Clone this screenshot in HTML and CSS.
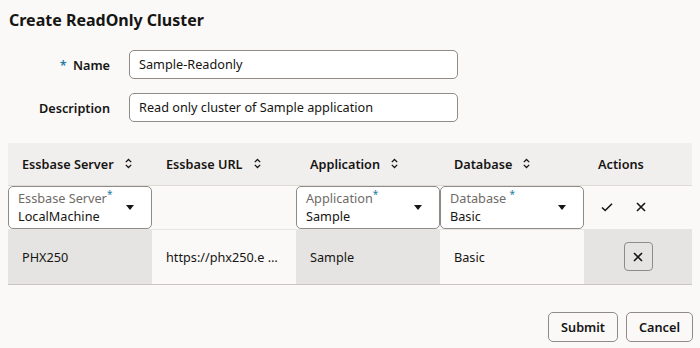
FILE: index.html
```html
<!DOCTYPE html>
<html lang="en">

<head>
  <meta charset="UTF-8">
  <title>Create ReadOnly Cluster</title>
  <link rel="stylesheet" href="styles.css">
</head>

<body>
  <h1 class="page-title">Create ReadOnly Cluster</h1>

  <div class="form">
    <div class="form-row">
      <label class="form-label"><span class="required">*</span> Name</label>
      <div class="text-input">Sample-Readonly</div>
    </div>
    <div class="form-row">
      <label class="form-label">Description</label>
      <div class="text-input">Read only cluster of Sample application</div>
    </div>
  </div>

  <table class="grid">
    <thead>
      <tr>
        <th><span class="th-inner">Essbase Server <svg class="sort" viewBox="0 0 10 14"><path d="M2 5.5 5 2.5 8 5.5M2 8.5 5 11.5 8 8.5"/></svg></span></th>
        <th><span class="th-inner">Essbase URL <svg class="sort" viewBox="0 0 10 14"><path d="M2 5.5 5 2.5 8 5.5M2 8.5 5 11.5 8 8.5"/></svg></span></th>
        <th><span class="th-inner">Application <svg class="sort" viewBox="0 0 10 14"><path d="M2 5.5 5 2.5 8 5.5M2 8.5 5 11.5 8 8.5"/></svg></span></th>
        <th><span class="th-inner">Database <svg class="sort" viewBox="0 0 10 14"><path d="M2 5.5 5 2.5 8 5.5M2 8.5 5 11.5 8 8.5"/></svg></span></th>
        <th>Actions</th>
      </tr>
    </thead>
    <tbody>
      <tr class="edit-row">
        <td class="cell-select">
          <div class="select">
            <div class="select-text">
              <span class="select-label">Essbase Server<span class="star">*</span></span>
              <span class="select-value">LocalMachine</span>
            </div>
            <span class="caret"></span>
          </div>
        </td>
        <td></td>
        <td class="cell-select">
          <div class="select">
            <div class="select-text">
              <span class="select-label">Application<span class="star">*</span></span>
              <span class="select-value">Sample</span>
            </div>
            <span class="caret"></span>
          </div>
        </td>
        <td class="cell-select">
          <div class="select">
            <div class="select-text">
              <span class="select-label">Database <span class="star">*</span></span>
              <span class="select-value">Basic</span>
            </div>
            <span class="caret"></span>
          </div>
        </td>
        <td>
          <div class="row-actions">
            <svg class="icon" viewBox="0 0 14 14"><path d="M2 7.5 5.2 10.5 12 3.8"/></svg>
            <svg class="icon" viewBox="0 0 14 14"><path d="M3 3 11 11M11 3 3 11"/></svg>
          </div>
        </td>
      </tr>
      <tr class="data-row">
        <td class="shade">PHX250</td>
        <td class="truncate">https://phx250.e …</td>
        <td class="shade">Sample</td>
        <td>Basic</td>
        <td class="shade">
          <div class="delete-wrap">
            <span class="icon-button"><svg class="icon" viewBox="0 0 14 14"><path d="M3 3 11 11M11 3 3 11"/></svg></span>
          </div>
        </td>
      </tr>
    </tbody>
  </table>

  <div class="footer">
    <button class="btn">Submit</button>
    <button class="btn">Cancel</button>
  </div>
</body>

</html>
```

FILE: styles.css
```css
* {
  margin: 0;
  padding: 0;
  box-sizing: border-box;
}

body {
  font-family: 'Noto Sans', sans-serif;
  font-size: 12.7px;
  color: #161513;
  background: #faf9f8;
  width: 700px;
  height: 348px;
  padding: 0 7px 0 8px;
  overflow: hidden;
}

.page-title {
  font-size: 16px;
  font-weight: 700;
  line-height: 20px;
  padding: 10px 0 0 1px;
  height: 50px;
}

.form {
  display: flex;
  flex-direction: column;
  gap: 14px;
}

.form-row {
  display: flex;
  align-items: center;
  gap: 19px;
}

.form-label {
  width: 102px;
  text-align: right;
  font-weight: 600;
}

.required {
  color: #227e9e;
  margin-right: 3px;
}

.text-input {
  width: 329px;
  height: 29px;
  border: 1px solid #8f8c88;
  border-radius: 5px;
  background: #fff;
  padding: 0 9px;
  line-height: 27px;
}

.grid {
  margin-top: 21px;
  width: 684px;
  border-collapse: collapse;
  table-layout: fixed;
}

.grid th {
  height: 42px;
  background: #f1efed;
  text-align: left;
  font-weight: 600;
  padding: 0 14px;
  border-bottom: 1px solid #dfdcd8;
}

.grid th:nth-child(-n+4) {
  width: 144px;
}

.th-inner {
  display: flex;
  align-items: center;
  gap: 10px;
}

.sort {
  width: 9px;
  height: 13px;
  fill: none;
  stroke: #161513;
  stroke-width: 1.4;
}

.grid td {
  padding: 0 14px;
  vertical-align: middle;
}

.edit-row td {
  height: 44px;
  border-bottom: 1px solid #e7e5e2;
}

.edit-row td.cell-select {
  padding: 0;
}

.select {
  height: 43px;
  border: 1px solid #8f8c88;
  border-radius: 5px;
  background: #fff;
  display: flex;
  align-items: center;
  padding: 0 17px 0 9px;
}

.select-text {
  flex: 1;
  display: flex;
  flex-direction: column;
  line-height: 18px;
}

.select-label {
  color: #6f6b67;
}

.star {
  color: #227e9e;
  font-size: 10px;
  line-height: 1;
  vertical-align: 5px;
}

.caret {
  width: 0;
  height: 0;
  border-left: 4px solid transparent;
  border-right: 4px solid transparent;
  border-top: 5px solid #161513;
}

.row-actions {
  display: flex;
  gap: 20px;
  padding-left: 2px;
}

.icon {
  width: 14px;
  height: 14px;
  fill: none;
  stroke: #161513;
  stroke-width: 1.6;
}

.data-row td {
  height: 55px;
  border-bottom: 1px solid #c9c6c2;
}

.data-row td.shade {
  background: #e5e4e2;
}

.truncate {
  white-space: nowrap;
  overflow: hidden;
}

.delete-wrap {
  display: flex;
  justify-content: center;
}

.icon-button {
  width: 29px;
  height: 29px;
  border: 1px solid #8f8c88;
  border-radius: 4px;
  display: flex;
  align-items: center;
  justify-content: center;
}

.footer {
  display: flex;
  justify-content: flex-end;
  gap: 8px;
  margin-top: 27px;
}

.btn {
  font-family: inherit;
  font-size: 12.7px;
  font-weight: 600;
  color: #161513;
  background: #faf9f8;
  border: 1px solid #8f8c88;
  border-radius: 5px;
  height: 30px;
  padding: 0 12px;
}
```
